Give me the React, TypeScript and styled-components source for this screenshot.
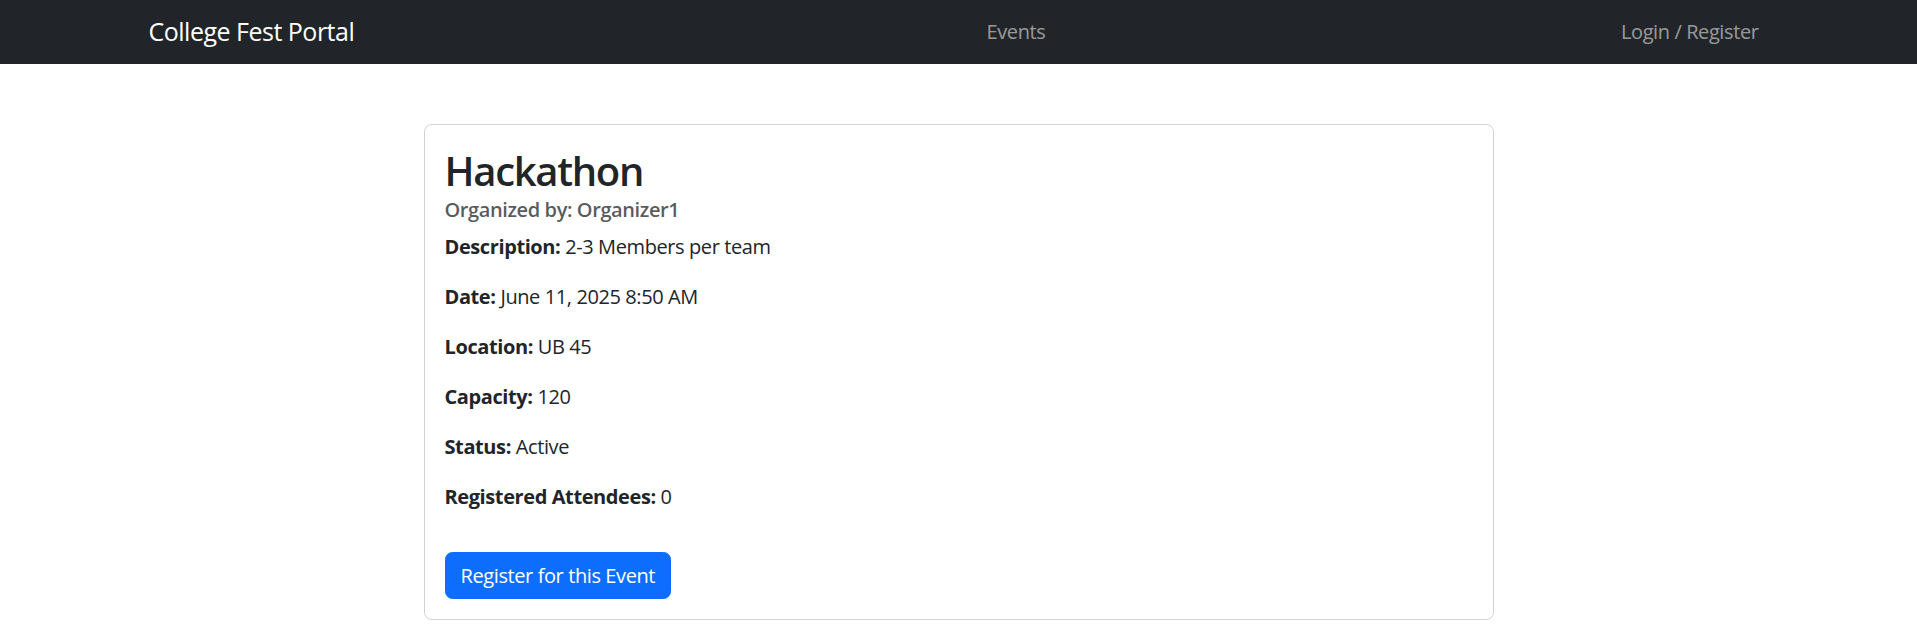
import styled, { createGlobalStyle } from 'styled-components'

const GlobalStyle = createGlobalStyle`
  body {
    margin: 0;
    font-family: "Open Sans", "Noto Sans", "Liberation Sans", sans-serif;
    font-size: 20px;
    line-height: 1.5;
    letter-spacing: -0.4px;
    color: #212529;
    background: #fff;
  }
  * {
    box-sizing: border-box;
  }
`

const Navbar = styled.nav`
  height: 64px;
  background: #212529;
`
const NavContainer = styled.div`
  max-width: 1650px;
  height: 100%;
  margin: 0 auto;
  padding: 0 15px;
  display: grid;
  grid-template-columns: 828px auto 1fr;
  align-items: center;
`
const Brand = styled.a`
  font-size: 25px;
  line-height: 1.5;
  letter-spacing: -0.5px;
  color: #fff;
  text-decoration: none;
`
const NavLink = styled.a<{ $end?: boolean }>`
  padding: 10px;
  font-size: 20px;
  color: rgba(255, 255, 255, 0.55);
  text-decoration: none;
  justify-self: ${(p) => (p.$end ? 'end' : 'start')};
`
const Container = styled.div`
  max-width: 1650px;
  margin: 60px auto 0;
  padding: 0 15px;
`
const Row = styled.div`
  display: flex;
  justify-content: center;
  margin: 0 -15px;
`
const Column = styled.div`
  width: 66.6667%;
  padding: 0 15px;
`
const Card = styled.div`
  border: 1px solid rgba(0, 0, 0, 0.175);
  border-radius: 7.5px;
  padding: 20px;
`
const Title = styled.h2`
  margin: 0 0 10px;
  font-size: 40px;
  font-weight: 600;
  line-height: 1.2;
  letter-spacing: -1.3px;
  padding-top: 2px;
  margin-bottom: 8px;
`
const Subtitle = styled.h6`
  margin: -5px 0 10px;
  font-size: 20px;
  font-weight: 600;
  line-height: 1.2;
  color: rgba(33, 37, 41, 0.75);
`
const Detail = styled.p`
  margin: 0 0 20px;
`
const Label = styled.strong`
  font-weight: 700;
`
const Actions = styled.div`
  padding-top: 20px;
`
const Button = styled.button`
  height: 47px;
  padding: 7px 15px;
  font-family: inherit;
  font-size: 20px;
  line-height: 1.5;
  letter-spacing: inherit;
  color: #fff;
  background: #0d6efd;
  border: 1px solid #0d6efd;
  border-radius: 7.5px;
  cursor: pointer;
`

const details = [
  ['Description', '2-3 Members per team'],
  ['Date', 'June 11, 2025 8:50 AM'],
  ['Location', 'UB 45'],
  ['Capacity', '120'],
  ['Status', 'Active'],
  ['Registered Attendees', '0'],
]

export default function App() {
  return (
    <div>
      <GlobalStyle />
      <Navbar>
        <NavContainer>
          <Brand href="#">College Fest Portal</Brand>
          <NavLink href="#">Events</NavLink>
          <NavLink href="#" $end>Login / Register</NavLink>
        </NavContainer>
      </Navbar>
      <Container>
        <Row>
          <Column>
            <Card>
              <Title>Hackathon</Title>
              <Subtitle>Organized by: Organizer1</Subtitle>
              {details.map(([label, value]) => (
                <Detail key={label}>
                  <Label>{label}:</Label> {value}
                </Detail>
              ))}
              <Actions>
                <Button>Register for this Event</Button>
              </Actions>
            </Card>
          </Column>
        </Row>
      </Container>
    </div>
  )
}
